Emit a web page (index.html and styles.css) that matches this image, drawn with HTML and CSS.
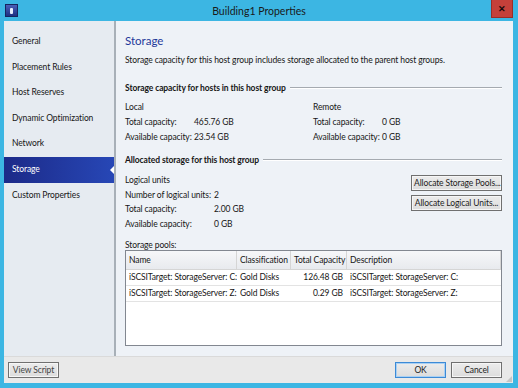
FILE: index.html
```html
<!DOCTYPE html>
<html lang="en">
<head>
  <meta charset="UTF-8" />
  <title>Building1 Properties</title>
  <link rel="stylesheet" href="styles.css">
</head>
<body>
  <div class="window">
    <!-- Title bar -->
    <div class="titlebar">
      <span class="app-icon"><span class="app-glyph"></span></span>
      <span class="title">Building1 Properties</span>
      <span class="close">&#x2715;</span>
    </div>

    <div class="frame">
      <div class="body">
        <!-- Left navigation -->
        <ul class="nav">
          <li>General</li>
          <li>Placement Rules</li>
          <li>Host Reserves</li>
          <li>Dynamic Optimization</li>
          <li>Network</li>
          <li class="selected">Storage</li>
          <li>Custom Properties</li>
        </ul>

        <!-- Main page -->
        <div class="main">
          <h2 class="page-title">Storage</h2>
          <p class="desc">Storage capacity for this host group includes storage allocated to the parent host groups.</p>

          <div class="group-title"><span>Storage capacity for hosts in this host group</span></div>
          <div class="capacity">
            <div class="cap-col">
              <div class="row">Local</div>
              <div class="row"><span class="label">Total capacity:</span><span>465.76 GB</span></div>
              <div class="row"><span class="label">Available capacity:</span><span>23.54 GB</span></div>
            </div>
            <div class="cap-col">
              <div class="row">Remote</div>
              <div class="row"><span class="label">Total capacity:</span><span>0 GB</span></div>
              <div class="row"><span class="label">Available capacity:</span><span>0 GB</span></div>
            </div>
          </div>

          <div class="group-title alloc"><span>Allocated storage for this host group</span></div>
          <div class="allocated">
            <div class="units">
              <div class="row">Logical units</div>
              <div class="row"><span class="label wide">Number of logical units:</span><span>2</span></div>
              <div class="row"><span class="label wide">Total capacity:</span><span>2.00 GB</span></div>
              <div class="row"><span class="label wide">Available capacity:</span><span>0 GB</span></div>
            </div>
            <div class="actions">
              <button class="btn">Allocate Storage Pools...</button>
              <button class="btn">Allocate Logical Units...</button>
            </div>
          </div>

          <div class="pools-label">Storage pools:</div>
          <div class="grid">
            <div class="grid-head">
              <div class="c-name">Name</div>
              <div class="c-class">Classification</div>
              <div class="c-cap">Total Capacity</div>
              <div class="c-desc">Description</div>
            </div>
            <div class="grid-row">
              <div class="c-name">iSCSITarget: StorageServer: C:</div>
              <div class="c-class">Gold Disks</div>
              <div class="c-cap num">126.48 GB</div>
              <div class="c-desc">iSCSITarget: StorageServer: C:</div>
            </div>
            <div class="grid-row">
              <div class="c-name">iSCSITarget: StorageServer: Z:</div>
              <div class="c-class">Gold Disks</div>
              <div class="c-cap num">0.29 GB</div>
              <div class="c-desc">iSCSITarget: StorageServer: Z:</div>
            </div>
          </div>
        </div>
      </div>

      <!-- Footer buttons -->
      <div class="footer">
        <button class="btn small">View Script</button>
        <div class="footer-right">
          <button class="btn default">OK</button>
          <button class="btn">Cancel</button>
        </div>
        <span class="grip"></span>
      </div>
    </div>
  </div>
</body>
</html>
```

FILE: styles.css
```css
body {
  margin: 0;
  font-family: Lato, "Open Sans", sans-serif;
  font-size: 8.5px;
  letter-spacing: -0.1px;
  color: #161616;
  background-color: #3cb6e3;
}
.window {
  width: 518px;
  height: 388px;
  display: flex;
  flex-direction: column;
  background-color: #3cb6e3;
}
/* Title bar */
.titlebar {
  position: relative;
  height: 21px;
  display: flex;
  align-items: center;
  justify-content: center;
}
.app-icon {
  position: absolute;
  left: 5px;
  top: 4px;
  width: 11px;
  height: 11px;
  background: linear-gradient(#4a5fb8, #1d2f82);
  border: 1px solid #16245e;
  display: flex;
  align-items: center;
  justify-content: center;
}
.app-glyph {
  width: 3px;
  height: 6px;
  background-color: #e8eefc;
  border-radius: 1px;
}
.title {
  font-size: 10.5px;
  letter-spacing: 0;
  color: #1a1a1a;
}
.close {
  position: absolute;
  right: 5px;
  top: 0;
  width: 22px;
  height: 18px;
  background-color: #c5403a;
  border: 1px solid #9a2d28;
  border-top: none;
  box-sizing: border-box;
  color: #1a0a0a;
  font-size: 9px;
  font-weight: bold;
  display: flex;
  align-items: center;
  justify-content: center;
}
/* Frame */
.frame {
  flex: 1;
  display: flex;
  flex-direction: column;
  padding: 0 5px 5px 4px;
}
.body {
  height: 335px;
  display: flex;
}
/* Navigation */
.nav {
  list-style: none;
  margin: 0;
  padding: 8px 0 0 0;
  width: 110px;
  background-color: #e6ebf1;
  border-right: 2px solid #a8b0b8;
}
.nav li {
  height: 25.6px;
  line-height: 25.6px;
  padding-left: 8px;
  position: relative;
  white-space: nowrap;
}
.nav li.selected {
  background: linear-gradient(90deg, #1c2a88, #2747b6);
  color: #fff;
}
.nav li.selected::after {
  content: "";
  position: absolute;
  right: 0;
  top: 9px;
  border: 4px solid transparent;
  border-right-color: #fff;
}
/* Main */
.main {
  flex: 1;
  background-color: #eef2f7;
  padding: 12px 11px 0 9px;
  display: flex;
  flex-direction: column;
  white-space: nowrap;
}
.page-title {
  margin: 0;
  font-size: 11.5px;
  font-weight: normal;
  letter-spacing: 0;
  line-height: 16px;
  color: #24399a;
}
.desc {
  margin: 4px 0 0 0;
  line-height: 14px;
}
.group-title {
  display: flex;
  align-items: center;
  gap: 4px;
  margin-top: 14px;
  line-height: 14px;
  font-weight: bold;
}
.group-title::after {
  content: "";
  flex: 1;
  height: 0;
  border-top: 1px solid #a5aab0;
  border-bottom: 1px solid #fff;
}
.group-title.alloc {
  margin-top: 8px;
}
.capacity {
  display: grid;
  grid-template-columns: 188px 1fr;
  margin-top: 5px;
}
.row {
  height: 15px;
  line-height: 15px;
  display: flex;
}
.label {
  width: 69px;
}
.label.wide {
  width: 89px;
}
.allocated {
  display: flex;
  justify-content: space-between;
  margin-top: 6px;
}
.units .row {
  height: 14.5px;
  line-height: 14.5px;
}
.actions {
  display: flex;
  flex-direction: column;
  gap: 4px;
  padding-top: 2px;
}
.btn {
  font-family: inherit;
  font-size: 8.5px;
  letter-spacing: -0.1px;
  color: #1c1c1c;
  background: linear-gradient(#ececec, #dcdcdc);
  border: 1px solid #707070;
  box-shadow: inset 0 0 0 1px #f6f6f6;
  height: 16px;
  padding: 0 2px;
  margin: 0;
  width: 91px;
  white-space: nowrap;
}
.pools-label {
  margin-top: 9px;
  line-height: 10px;
}
.grid {
  height: 96px;
  background-color: #fff;
  border: 1px solid #828790;
  box-sizing: border-box;
}
.grid-head, .grid-row {
  display: grid;
  grid-template-columns: 111px 54px 56px 1fr;
}
.grid-head {
  height: 18px;
  line-height: 18px;
  background: linear-gradient(#f6f7f9, #e8eaee);
  border-bottom: 1px solid #d5d5d5;
}
.grid-head div {
  padding-left: 3px;
  border-right: 1px solid #d5d5d5;
  overflow: hidden;
}
.grid-row {
  height: 15px;
  line-height: 15px;
  border-bottom: 1px solid #e3e3e3;
}
.grid-row div {
  padding-left: 3px;
  overflow: hidden;
}
.grid-row .num {
  text-align: right;
  padding-right: 4px;
}
/* Footer */
.footer {
  position: relative;
  flex: 1;
  display: flex;
  align-items: center;
  justify-content: space-between;
  padding: 0 11px 0 4px;
  background-color: #e9e9e9;
  border-top: 1px solid #dadada;
}
.footer .btn.small {
  width: 51px;
  color: #444;
}
.footer-right {
  display: flex;
  gap: 5px;
}
.footer-right .btn {
  width: 51px;
}
.btn.default {
  border-color: #3c8ad6;
  box-shadow: inset 0 0 0 1px #a9d0f3;
}
.grip {
  position: absolute;
  right: 1px;
  bottom: 1px;
  width: 6px;
  height: 6px;
  background: radial-gradient(circle, #9a9a9a 0.6px, transparent 0.8px) 0 0 / 2px 2px;
  clip-path: polygon(100% 0, 100% 100%, 0 100%);
}
```
